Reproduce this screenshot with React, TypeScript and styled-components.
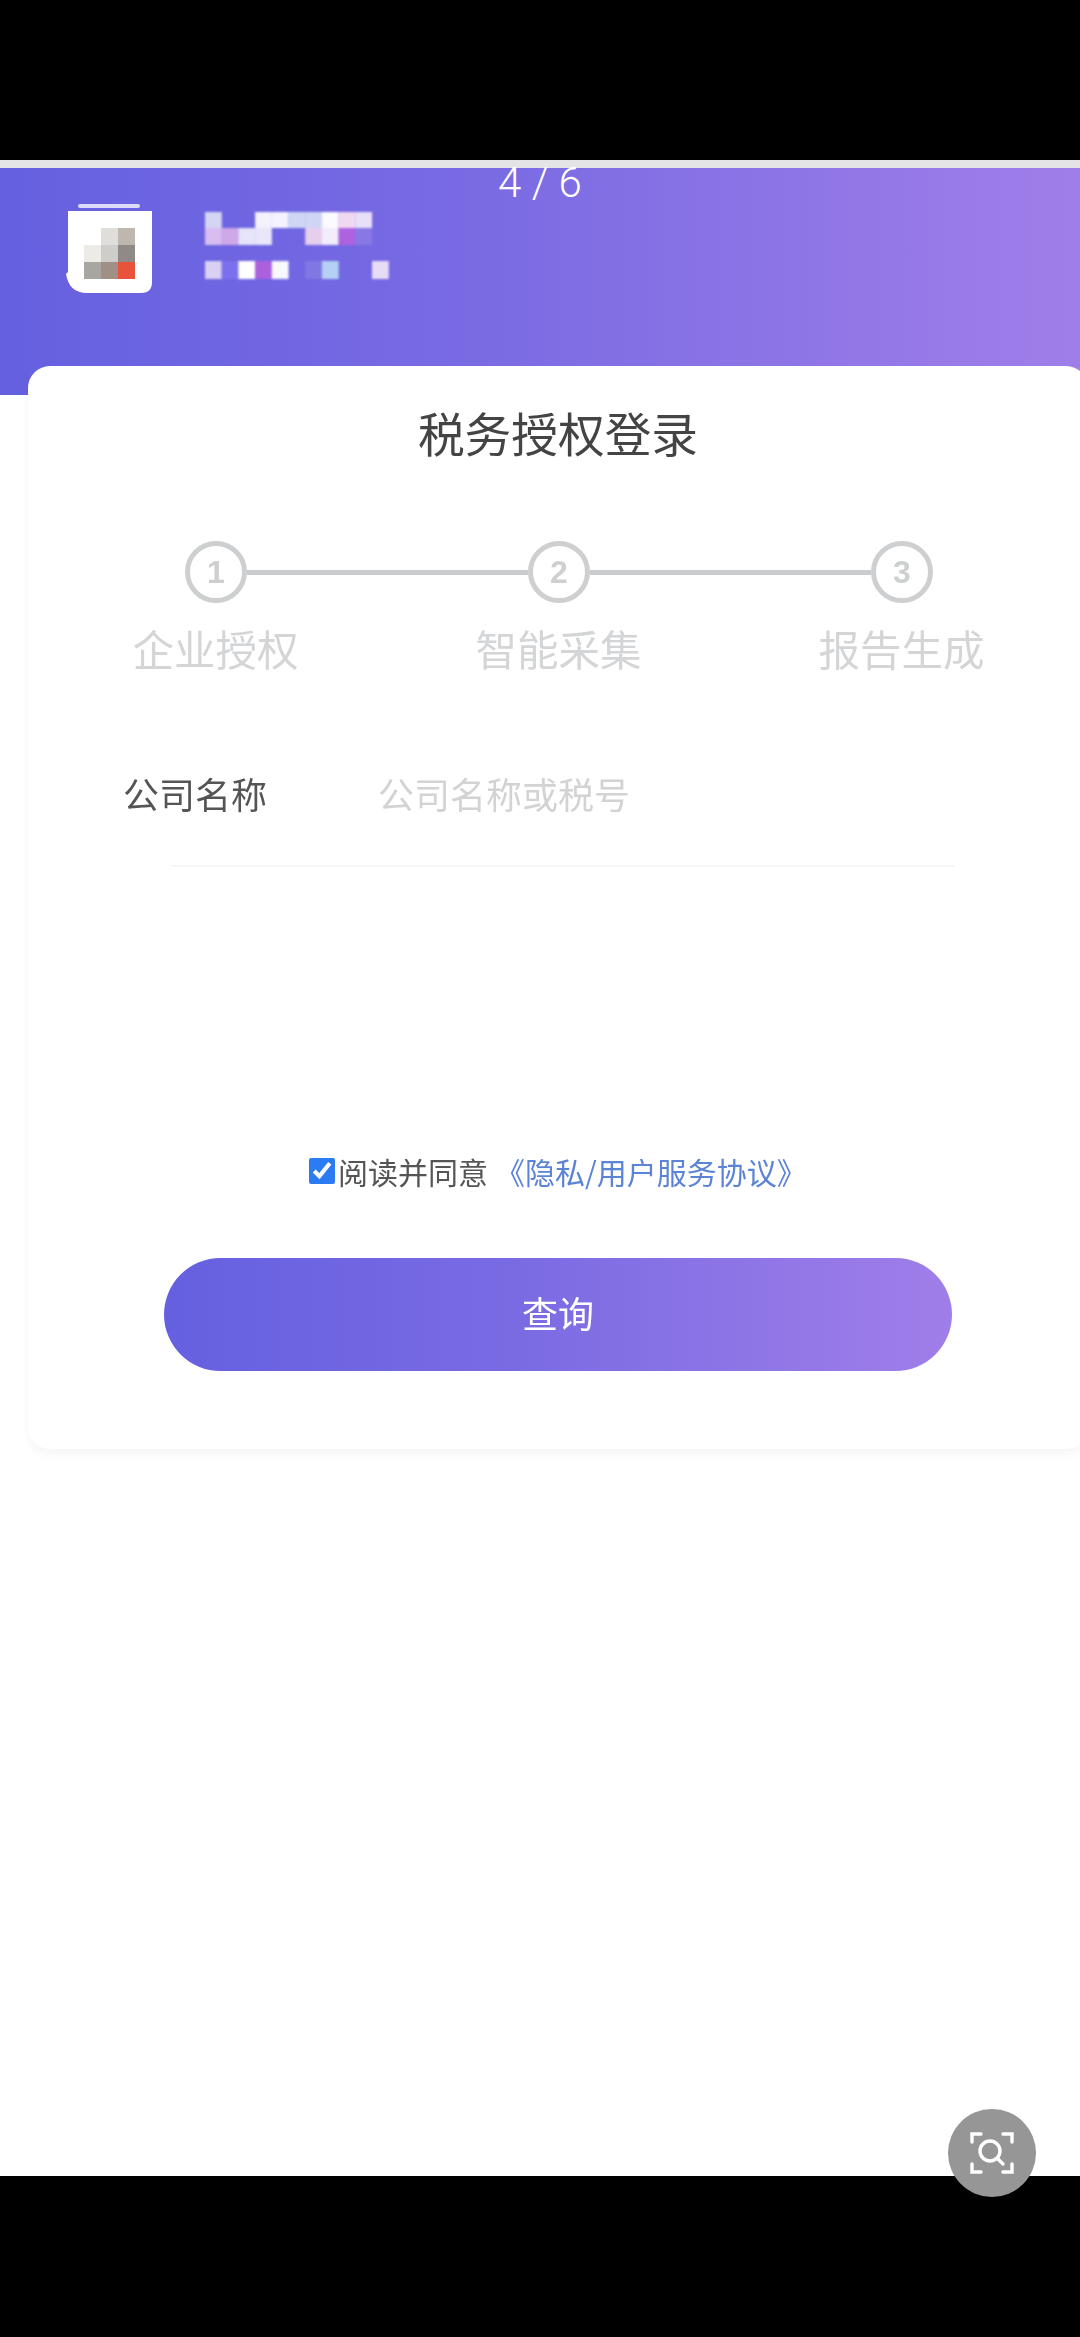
import * as React from 'react';
import styled, { createGlobalStyle } from 'styled-components';

const STEPS = ['企业授权', '智能采集', '报告生成'];

const GRADIENT = 'linear-gradient(90deg, #6560e0 0%, #7a6be3 45%, #a07ee9 100%)';

const LOGO_CELLS = [
  ['#ffffff', '#e0dedb', '#bdb7b0'],
  ['#ecebe8', '#cfcdca', '#8f8a87'],
  ['#a8a6a0', '#a08f85', '#e8533c'],
];

const NAME_ROWS: { y: number; h: number; cells: (string | null)[] }[] = [
  {
    y: 0,
    h: 16,
    cells: ['#d4d4f3', null, null, '#f3f2fd', '#f3f2fd', '#cfd6f5', '#cfd6f5', '#fbfaff', '#f0d8f0', '#e8e0f8'],
  },
  {
    y: 16,
    h: 17,
    cells: ['#d8bdf0', '#cfa8e8', '#e6e4f8', '#e8e6f8', null, null, '#e6cfec', '#f3ecfa', '#ae62e0', '#8878e6'],
  },
  {
    y: 49,
    h: 18,
    cells: ['#d9d0f3', '#7a70ee', '#ffffff', '#ac60de', '#f8f8ff', null, '#7f78e4', '#b4d0f4', null, null, '#e6dcf6'],
  },
];

export default function App() {
  return (
    <>
      <GlobalStyle />
      <Page>
        <BlackBand $height={160} />
        <LightStrip />
        <Header>
          <Logo />
          <BlurredName />
        </Header>
        <Main>
          <Card>
            <Title>税务授权登录</Title>
            <StepTrack>
              <StepCircle>1</StepCircle>
              <StepLine />
              <StepCircle>2</StepCircle>
              <StepLine />
              <StepCircle>3</StepCircle>
            </StepTrack>
            <StepLabels>
              {STEPS.map(s => (
                <StepLabel key={s}>{s}</StepLabel>
              ))}
            </StepLabels>
            <FieldRow>
              <FieldLabel>公司名称</FieldLabel>
              <FieldInput placeholder="公司名称或税号" readOnly />
            </FieldRow>
            <AgreeRow>
              <AgreeCheck type="checkbox" defaultChecked />
              <span>阅读并同意</span>
              <AgreeLink href="#">《隐私/用户服务协议》</AgreeLink>
            </AgreeRow>
            <SubmitButton>查询</SubmitButton>
          </Card>
        </Main>
        <BlackBand $height={161} />
        <PageCounter>4 / 6</PageCounter>
        <ScanButton>
          <ScanIcon />
        </ScanButton>
      </Page>
    </>
  );
}

function Logo() {
  return (
    <LogoSvg width="90" height="92" viewBox="0 0 90 92">
      <rect x="13" y="0" width="62" height="4" rx="2" fill="#dcdaf8" />
      <path
        d="M3 7 H87 V78 Q87 89 76 89 H22 Q4 89 1 70 L3 68 Z"
        fill="#ffffff"
      />
      {LOGO_CELLS.map((row, r) =>
        row.map((c, i) => (
          <rect key={`${r}-${i}`} x={19 + i * 17} y={24 + r * 17} width="17" height="17" fill={c} />
        )),
      )}
    </LogoSvg>
  );
}

function BlurredName() {
  return (
    <NameSvg width="190" height="70" viewBox="0 0 190 70">
      {NAME_ROWS.map(row =>
        row.cells.map((c, i) =>
          c ? <rect key={`${row.y}-${i}`} x={i * 16.7} y={row.y} width="16.8" height={row.h} fill={c} /> : null,
        ),
      )}
    </NameSvg>
  );
}

function ScanIcon() {
  return (
    <svg width="44" height="44" viewBox="0 0 44 44" fill="none" stroke="#fff" strokeWidth="3.4" strokeLinecap="round">
      <path d="M2 11 V3 H11" />
      <path d="M33 3 H42 V11" />
      <path d="M2 33 V41 H11" />
      <path d="M33 41 H42 V33" />
      <circle cx="20" cy="20" r="10" />
      <path d="M27.5 27.5 L33 33" />
    </svg>
  );
}

const GlobalStyle = createGlobalStyle`
  html, body {
    margin: 0;
    padding: 0;
    background: #fff;
  }
  body {
    font-family: 'Noto Sans CJK SC', 'Noto Sans', sans-serif;
  }
`;

const Page = styled.div`
  position: relative;
  display: flex;
  flex-direction: column;
  width: 1080px;
  height: 2337px;
  overflow: hidden;
  background: #fff;
`;

const BlackBand = styled.div<{ $height: number }>`
  flex: none;
  height: ${p => p.$height}px;
  background: #000;
`;

const LightStrip = styled.div`
  flex: none;
  height: 8px;
  background: #e4e4e6;
`;

const Header = styled.div`
  flex: none;
  display: flex;
  align-items: flex-start;
  gap: 50px;
  height: 227px;
  box-sizing: border-box;
  padding: 36px 0 0 65px;
  background: ${GRADIENT};
`;

const LogoSvg = styled.svg`
  flex: none;
  filter: blur(0.7px);
`;

const NameSvg = styled.svg`
  flex: none;
  margin-top: 8px;
  filter: blur(0.8px);
`;

const Main = styled.main`
  flex: 1;
  min-height: 0;
`;

const Card = styled.section`
  box-sizing: border-box;
  width: 1060px;
  height: 1083px;
  margin: -29px 0 0 28px;
  padding-top: 31px;
  background: #fff;
  border-radius: 22px;
  box-shadow: 0 6px 10px rgba(0, 0, 0, 0.04);
  filter: blur(0.6px);
`;

const Title = styled.h1`
  margin: 0;
  height: 70px;
  font-size: 46.7px;
  line-height: 70px;
  font-weight: 400;
  text-align: center;
  color: #444;
`;

const StepTrack = styled.div`
  display: flex;
  align-items: center;
  margin: 74px 0 0 157px;
  width: 748px;
`;

const StepCircle = styled.div`
  flex: none;
  display: flex;
  align-items: center;
  justify-content: center;
  box-sizing: border-box;
  width: 62px;
  height: 62px;
  border: 5px solid #cdcfd1;
  border-radius: 50%;
  font-family: 'Liberation Sans', sans-serif;
  font-size: 32px;
  font-weight: 700;
  color: #cdcfd1;
`;

const StepLine = styled.div`
  flex: 1;
  height: 5px;
  background: #c9cbcc;
`;

const StepLabels = styled.div`
  display: grid;
  grid-template-columns: repeat(3, 343px);
  margin: 15px 0 0 16px;
`;

const StepLabel = styled.div`
  font-size: 41.5px;
  line-height: 60px;
  text-align: center;
  color: #d3d5d7;
`;

const FieldRow = styled.div`
  display: flex;
  align-items: flex-start;
  gap: 111px;
  box-sizing: border-box;
  width: 783px;
  height: 100px;
  margin: 89px 0 0 143px;
  padding-top: 1px;
  border-bottom: 2px solid #f6f6f6;
`;

const FieldLabel = styled.label`
  flex: none;
  margin-left: -48px;
  font-size: 36px;
  line-height: 50px;
  color: #555;
`;

const FieldInput = styled.input`
  flex: 1;
  min-width: 0;
  height: 50px;
  border: none;
  outline: none;
  padding: 0;
  background: transparent;
  font-family: inherit;
  font-size: 36px;
  &::placeholder {
    color: #d2d3d4;
  }
`;

const AgreeRow = styled.div`
  display: flex;
  align-items: center;
  justify-content: center;
  height: 44px;
  margin-top: 282px;
  font-size: 30px;
  color: #555;
`;

const AgreeCheck = styled.input`
  flex: none;
  width: 26px;
  height: 26px;
  margin: 0 3px 0 0;
  accent-color: #2b7cf2;
`;

const AgreeLink = styled.a`
  margin-left: 7px;
  color: #5b83d6;
  text-decoration: none;
`;

const SubmitButton = styled.button`
  display: block;
  width: 788px;
  height: 113px;
  margin: 65px 0 0 136px;
  padding: 0 0 6px;
  border: none;
  border-radius: 57px;
  background: ${GRADIENT};
  font-family: inherit;
  font-size: 36px;
  color: #fff;
`;

const PageCounter = styled.div`
  position: absolute;
  top: 159px;
  left: 0;
  width: 1080px;
  text-align: center;
  font-family: Roboto, sans-serif;
  font-weight: 300;
  font-size: 42px;
  line-height: 48px;
  color: #fff;
`;

const ScanButton = styled.div`
  position: absolute;
  left: 948px;
  top: 2109px;
  display: flex;
  align-items: center;
  justify-content: center;
  width: 88px;
  height: 88px;
  border-radius: 50%;
  background: #969696;
`;
